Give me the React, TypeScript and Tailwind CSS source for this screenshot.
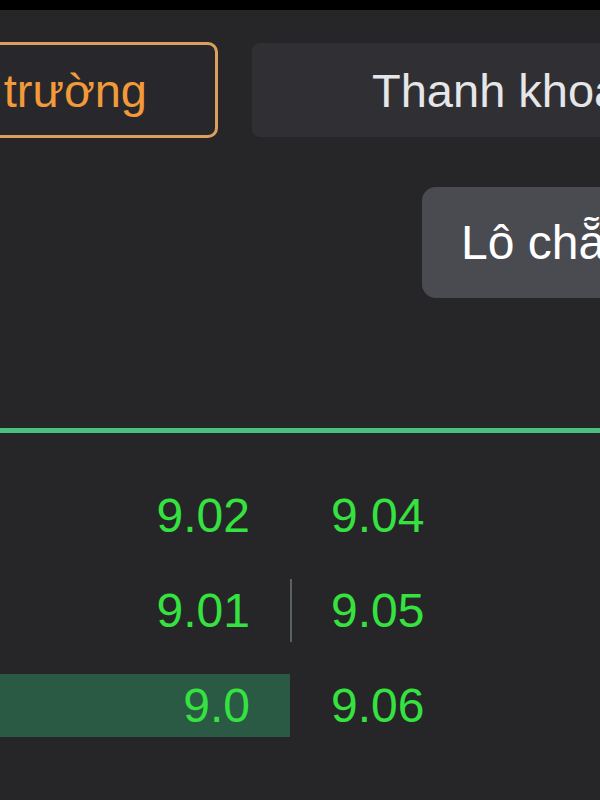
const bids = ["9.02", "9.01", "9.0"];
const asks = ["9.04", "9.05", "9.06"];

export default function App() {
  return (
    <div
      className="w-[600px] h-[800px] overflow-hidden bg-[#262629] text-white"
      style={{ fontFamily: '"Liberation Sans", Arial, sans-serif' }}
    >
      <div className="h-[10px] bg-black" />

      {/* tabs */}
      <div className="mt-[32px] flex items-center gap-[34px]">
        <div className="ml-[-160px] w-[378px] h-[96px] shrink-0 flex items-center justify-end pr-[68px] rounded-[10px] border-[3px] border-[#dc9f5f] bg-[#28282c]">
          <span className="text-[47px] leading-none text-[#f29a3a] whitespace-nowrap">Thị trường</span>
        </div>
        <div className="w-[420px] h-[94px] shrink-0 flex items-center pl-[120px] rounded-[8px] bg-[#303034]">
          <span className="text-[47px] leading-none text-[#e6e6e8] whitespace-nowrap">Thanh khoản</span>
        </div>
      </div>

      {/* lot toggle */}
      <div className="mt-[49px] flex justify-end">
        <div className="w-[220px] mr-[-42px] h-[111px] flex items-center pl-[39px] rounded-[14px] bg-[#4a4a51]">
          <span className="text-[48px] leading-none text-white whitespace-nowrap">Lô chẵn</span>
        </div>
      </div>

      <div className="mt-[130px] h-[5px] bg-[#4dbd80] shadow-[0_0_3px_#0a3a1a]" />

      {/* order book rows */}
      <div className="mt-[51px] flex flex-col gap-[32px]">
        {bids.map((b, i) => (
          <div key={b} className="flex h-[63px] items-center">
            <div
              className={
                "w-[290px] h-full flex items-center justify-end pr-[40px] " +
                (i === 2 ? "bg-[#2b5a44]" : "")
              }
            >
              <span className="text-[48px] leading-none text-[#35e23f]">{b}</span>
            </div>
            <div
              className={
                "h-full flex items-center pl-[39px] border-l-[2px] " +
                (i === 1 ? "border-[#5a625e]" : "border-transparent")
              }
            >
              <span className="text-[48px] leading-none text-[#35e23f]">{asks[i]}</span>
            </div>
          </div>
        ))}
      </div>
    </div>
  );
}
